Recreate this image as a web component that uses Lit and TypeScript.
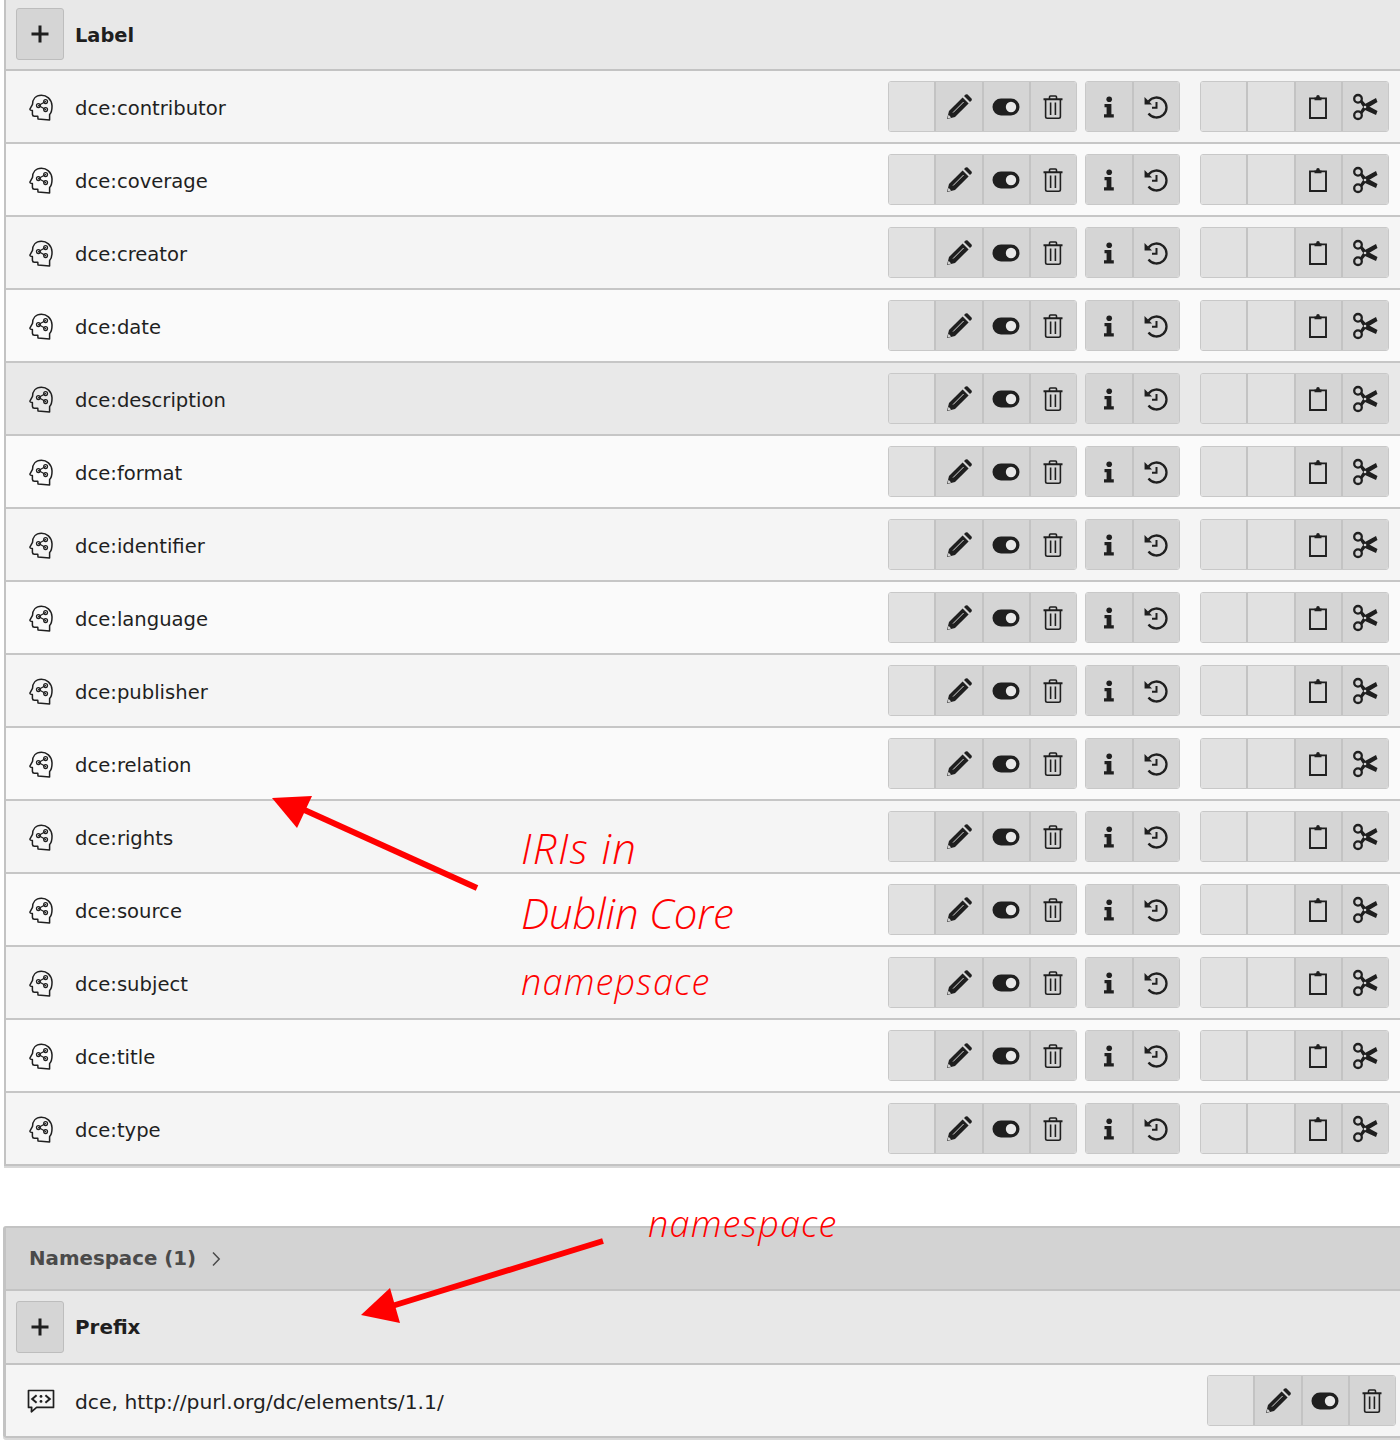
import { LitElement, html, css, svg } from "lit";
import { customElement } from "lit/decorators.js";

const S = (w: number, h: number, body: unknown) =>
  html`<svg width=${w} height=${h} viewBox="0 0 ${w} ${h}" aria-hidden="true">${body}</svg>`;

const pencil = S(26, 26, svg`
  <path d="M1 25 L3 17 L16.6 3.4 L22.6 9.4 L9 23 Z" fill="#1f1f1f"/>
  <path d="M18 2 L19.6 .5 Q20.6 -.2 21.6 .5 L25.5 4.4 Q26.2 5.4 25.5 6.4 L24 8 Z" fill="#1f1f1f"/>
  <path d="M7 18.6 L17.6 8" stroke="#d5d5d5" stroke-width="1"/>
  <path d="M1.6 24.4 L2.5 20.8 L5.2 23.5 Z" fill="#d5d5d5"/>`);
const toggle = S(28, 18, svg`
  <rect x=".5" y=".5" width="27" height="17" rx="8.5" fill="#1f1f1f"/>
  <circle cx="19" cy="9" r="5.2" fill="#e8e8e8"/>`);
const trash = S(20, 24, svg`
  <g fill="none" stroke="#1f1f1f" stroke-width="1.6">
    <path d="M6.5 4 V2 Q6.5 1 7.5 1 H12.5 Q13.5 1 13.5 2 V4"/>
    <path d="M.5 4.3 H19.5" stroke-width="2"/>
    <path d="M2.6 4.5 V21.5 Q2.6 23.2 4.3 23.2 H15.7 Q17.4 23.2 17.4 21.5 V4.5"/>
    <path d="M7.6 7.5 V20 M12.4 7.5 V20"/>
  </g>`);
const info = S(12, 22, svg`
  <circle cx="6.2" cy="3.2" r="2.8" fill="#1f1f1f"/>
  <path d="M1.5 8 H8.4 V18.2 H10.8 V21.4 H1 V18.2 H3.6 V11.2 H1.5 Z" fill="#1f1f1f"/>`);
const history = S(26, 24, svg`
  <path d="M5.5 6.5 A10 10 0 1 1 5.5 18.5" fill="none" stroke="#1f1f1f" stroke-width="2.3"/>
  <path d="M1.5 2 L9 9.4 L1.6 9.6 Z" fill="#1f1f1f"/>
  <path d="M13.5 7 V12.8 H9" fill="none" stroke="#1f1f1f" stroke-width="2"/>`);
const clip = S(18, 25, svg`
  <path d="M1 4.4 H17 V24 H1 Z" fill="none" stroke="#1f1f1f" stroke-width="1.9"/>
  <path d="M5.5 6.3 V3.4 H7 Q7.3 1 9 1 Q10.7 1 11 3.4 H12.5 V6.3 Z" fill="#1f1f1f"/>`);
const scissors = S(26, 28, svg`
  <g fill="none" stroke="#1f1f1f" stroke-width="2.3">
    <circle cx="6" cy="5.8" r="3.8"/>
    <circle cx="6" cy="22.2" r="3.8"/>
  </g>
  <path d="M7.5 8.5 L10 7 L14.5 12 L25.5 18 L24 22 L13 17 Z" fill="#1f1f1f"/>
  <path d="M7.5 19.5 L10 21 L14.5 15.5 L25.5 9 L24 5 L13 11 Z" fill="#1f1f1f"/>
  <circle cx="13" cy="14" r="1.3" fill="#d5d5d5"/>`);
const plus = S(18, 18, svg`<path d="M9 .5 V17.5 M.5 9 H17.5" stroke="#1f1f1f" stroke-width="3" fill="none"/>`);
const brain = S(24, 28, svg`
  <g fill="none" stroke="#1f1f1f" stroke-width="1.5" stroke-linejoin="round" stroke-linecap="round">
    <path d="M20.6 26 V20.6 Q23.2 17.8 23 11.6 C22.6 4.8 17.4 1.2 12.4 1.2 C6.4 1.2 3.6 5.6 3.5 10.4 L.9 15.2 Q.8 16 2 16.2 L3.4 16.4 V20.4 Q3.5 22.2 5.4 22.2 H8.8 L9 25 Z"/>
    <path d="M9.6 11.6 L16.6 7.6 M9.6 11.6 L16.6 15.6" stroke-width="1.2"/>
    <circle cx="9.4" cy="11.6" r="1.9" stroke-width="1.3"/><circle cx="16.6" cy="7.6" r="1.9" stroke-width="1.3"/><circle cx="16.6" cy="15.6" r="1.9" stroke-width="1.3"/>
  </g>`);
const codeBubble = S(28, 25, svg`
  <path d="M1.5 1.5 H26.5 V18.4 H9.6 L4.4 22.8 L4.7 18.4 H1.5 Z" fill="none" stroke="#1f1f1f" stroke-width="1.7" stroke-linejoin="round"/>
  <path d="M9.6 6.2 L5.2 10 L9.6 13.8 M18.4 6.2 L22.8 10 L18.4 13.8" fill="none" stroke="#1f1f1f" stroke-width="2"/>
  <circle cx="14" cy="7.4" r="1.4" fill="#1f1f1f"/><circle cx="14" cy="12.4" r="1.4" fill="#1f1f1f"/>`);
const chevron = S(10, 16, svg`<path d="M2 1.5 L8.2 8 L2 14.5" fill="none" stroke="#4a4a4a" stroke-width="1.5"/>`);

const labels = ["contributor", "coverage", "creator", "date", "description", "format", "identifier", "language", "publisher", "relation", "rights", "source", "subject", "title", "type"];

@customElement("app-root")
export class AppRoot extends LitElement {
  static styles = css`
    :host { display: block; position: relative; width: 1400px; height: 1444px; overflow: hidden; background: #fff; font-family: "DejaVu Sans", Verdana, sans-serif; color: #1f1f1f; }
    .panel { margin-left: 4px; border-left: 2px solid #c3c3c3; border-bottom: 2px solid #c3c3c3; box-shadow: 0 2px 0 #d8d8d8; }
    .panel.second { margin-top: 60px; border-top: 2px solid #c3c3c3; margin-left: 3px; border-left-width: 3px; border-radius: 3px 0 0 3px; }
    .head { height: 71px; box-sizing: border-box; display: flex; align-items: center; background: #e8e8e8; border-bottom: 2px solid #c3c3c3; padding: 0 0 1px 10px; font-weight: 700; font-size: 19.4px; }
    .second .head { height: 74px; padding-bottom: 0; font-size: 19.9px; }
    .lbl { margin-top: 2px; }
    .add { width: 48px; height: 52px; box-sizing: border-box; border: 1px solid #bdbdbd; border-radius: 3px; background: #d5d5d5; display: flex; align-items: center; justify-content: center; margin-right: 11px; }
    .row { height: 73px; box-sizing: border-box; display: flex; align-items: center; border-bottom: 2px solid #c6c6c6; font-size: 19.6px; padding: 0 11px 0 0; }
    .row:last-child { border-bottom: 0; height: 71px; }
    .odd { background: #f5f5f5; } .even { background: #fafafa; } .hover { background: #e9e9e9; }
    .ico { width: 69px; flex: none; display: flex; justify-content: center; margin-top: 2px; }
    .name { flex: 1; margin-top: 3px; }
    .group { display: flex; height: 51px; box-sizing: border-box; border: 1px solid #c8c8c8; border-radius: 3px; overflow: hidden; margin-left: 8px; }
    .w4 { width: 189px; } .w2 { width: 95px; }
    .group.far { margin-left: 20px; }
    .cell { flex: 1; box-sizing: border-box; display: flex; align-items: center; justify-content: center; background: #d5d5d5; border-left: 2px solid #c3c3c3; }
    .cell:first-child { border-left: 0; }
    .off { background: #e1e1e1; }
    .sec { height: 63px; box-sizing: border-box; display: flex; align-items: center; gap: 15px; background: #d3d3d3; color: #4a4a4a; font-weight: 700; font-size: 19.8px; padding-left: 23px; border-bottom: 2px solid #c3c3c3; }
    .row.ns, .row.ns:last-child { padding: 0 4px 0 0; height: 71px; font-size: 20.3px; }
    .overlay { position: absolute; inset: 0; pointer-events: none; }
    .note { position: absolute; color: #ff0000; font-family: "Open Sans", sans-serif; font-style: italic; font-weight: 300; white-space: nowrap; line-height: 1; }
    .n1 { left: 521px; top: 827px; font-size: 42px; letter-spacing: 1.4px; }
    .n2 { left: 521px; top: 892px; font-size: 42px; letter-spacing: -0.2px; }
    .n3 { left: 521px; top: 964px; font-size: 36px; letter-spacing: 1.2px; }
    .n4 { left: 648px; top: 1206px; font-size: 36px; letter-spacing: 1.2px; }
  `;

  private cell(icon: unknown) {
    return html`<div class="cell">${icon}</div>`;
  }
  private off() {
    return html`<div class="cell off"></div>`;
  }

  render() {
    return html`
      <div class="panel">
        <div class="head"><div class="add">${plus}</div><span class="lbl">Label</span></div>
        ${labels.map((l, i) => html`
          <div class="row ${l === "description" ? "hover" : i % 2 ? "even" : "odd"}">
            <div class="ico">${brain}</div>
            <div class="name">dce:${l}</div>
            <div class="group w4">${this.off()}${this.cell(pencil)}${this.cell(toggle)}${this.cell(trash)}</div>
            <div class="group w2">${this.cell(info)}${this.cell(history)}</div>
            <div class="group w4 far">${this.off()}${this.off()}${this.cell(clip)}${this.cell(scissors)}</div>
          </div>`)}
      </div>
      <div class="panel second">
        <div class="sec">Namespace (1) ${chevron}</div>
        <div class="head"><div class="add">${plus}</div>Prefix</div>
        <div class="row odd ns">
          <div class="ico">${codeBubble}</div>
          <div class="name">dce, http://purl.org/dc/elements/1.1/</div>
          <div class="group w4">${this.off()}${this.cell(pencil)}${this.cell(toggle)}${this.cell(trash)}</div>
        </div>
      </div>
      <svg class="overlay" width="1400" height="1444" viewBox="0 0 1400 1444" aria-hidden="true">
        <path d="M477 888 L300 808" stroke="#ff0000" stroke-width="6" fill="none"/>
        <path d="M272 798 L312 796 L297 828 Z" fill="#ff0000"/>
        <path d="M603 1241 L392 1306" stroke="#ff0000" stroke-width="6" fill="none"/>
        <path d="M361 1315 L390 1288 L400 1323 Z" fill="#ff0000"/>
      </svg>
      <span class="note n1">IRIs in</span>
      <span class="note n2">Dublin Core</span>
      <span class="note n3">namepsace</span>
      <span class="note n4">namespace</span>
    `;
  }
}
